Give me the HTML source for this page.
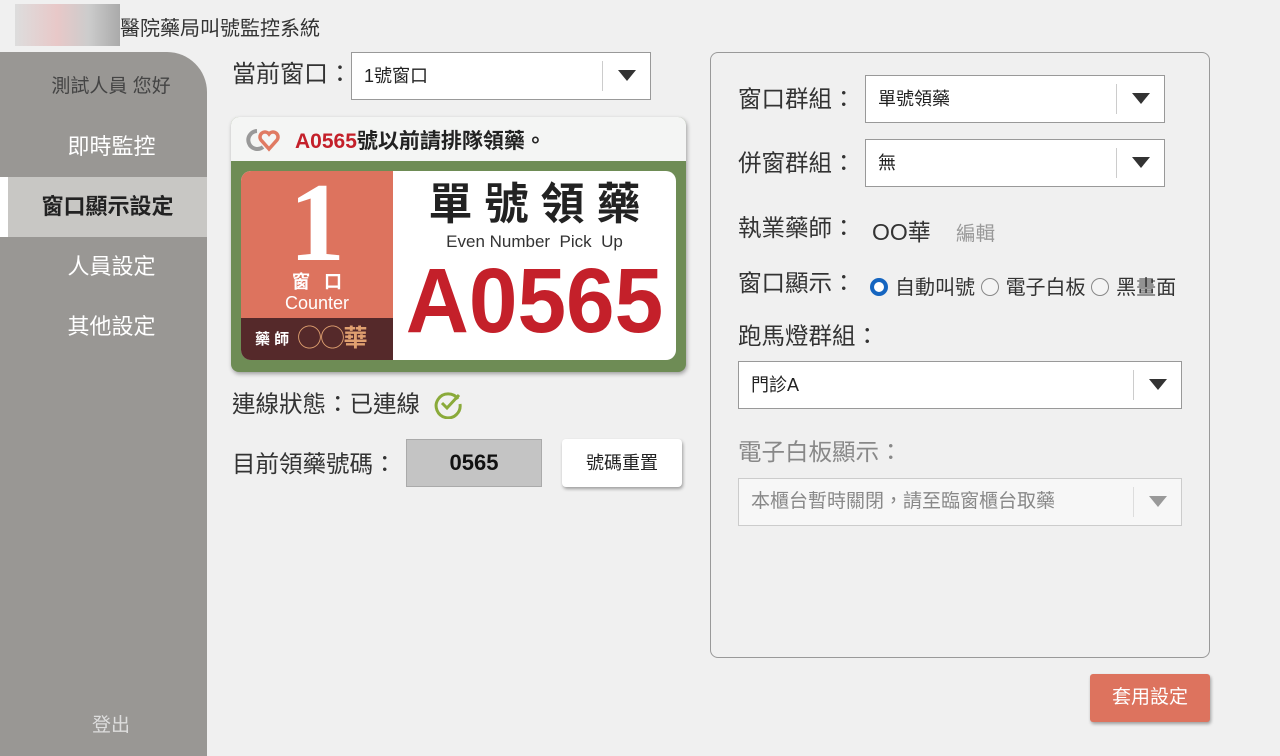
<!DOCTYPE html>
<html><head><meta charset="utf-8"><style>
*{margin:0;padding:0;box-sizing:border-box}
body{width:1280px;height:756px;background:#f0f0f0;font-family:"Liberation Sans","Noto Sans CJK TC",sans-serif;color:#333;position:relative;overflow:hidden}
.abs{position:absolute}
.side{left:0;top:52px;width:207px;height:704px;background:#999794;border-top-right-radius:40px}
.nav{position:absolute;left:0;width:207px;height:60px;line-height:60px;text-align:center;color:#fff;font-size:22px}
.sel{position:absolute;background:#fff;border:1px solid #999;height:48px;font-size:18px;padding-left:12px;line-height:46px;color:#222}
.sel .ar{position:absolute;right:0;top:8px;width:48px;height:30px;border-left:1px solid #ccc}
.sel .ar:after{content:"";position:absolute;left:15px;top:9px;border-left:9px solid transparent;border-right:9px solid transparent;border-top:11px solid #333}
.lbl{font-size:23.5px;color:#333;line-height:30px}
.radio{display:inline-block;width:18px;height:18px;border-radius:50%;border:1px solid #888;background:#f4f4f4;vertical-align:-2px;margin-right:7px}
</style></head><body>
<div class="abs" style="left:15px;top:4px;width:105px;height:42px;background:linear-gradient(90deg,#ddd,#e8c8c8 40%,#ccc 70%,#aaa)"></div>
<div class="abs" style="left:120px;top:12px;font-size:20px;color:#333">醫院藥局叫號監控系統</div>
<div class="abs side"></div>
<div class="abs" style="left:0;top:71px;width:222px;text-align:center;font-size:19px;color:#444">測試人員 您好</div>
<div class="nav" style="top:117px;left:8px">即時監控</div>
<div class="nav" style="top:177px;left:8px;width:199px;background:#c8c7c4;color:#222;font-weight:bold">窗口顯示設定</div>
<div class="abs" style="left:0;top:177px;width:8px;height:60px;background:#fff"></div>
<div class="nav" style="top:237px;left:8px">人員設定</div>
<div class="nav" style="top:297px;left:8px">其他設定</div>
<div class="abs" style="left:0;top:710px;width:222px;text-align:center;font-size:19px;color:#ddd">登出</div>

<div class="abs lbl" style="left:232px;top:60px;font-size:24px">當前窗口：</div>
<div class="sel" style="left:351px;top:52px;width:300px">1號窗口<div class="ar"></div></div>

<div class="abs" style="left:231px;top:117px;width:455px;height:255px;border-radius:8px;background:#6e8c55;box-shadow:1px 2px 4px rgba(0,0,0,.35);overflow:hidden">
 <div style="height:44px;background:#f4f5f4;position:relative">
  <svg class="abs" style="left:12px;top:10px" width="46" height="26" viewBox="0 0 46 26"><path d="M14 4a9 9 0 1 0 6 16" fill="none" stroke="#999" stroke-width="4"/><path d="M26 22l-8-9a5 5 0 0 1 8-6a5 5 0 0 1 8 6z" fill="none" stroke="#e07a62" stroke-width="3.5"/></svg>
  <div class="abs" style="left:64px;top:8px;font-size:21px;font-weight:bold;color:#222;white-space:nowrap"><span style="color:#c4202a">A0565</span>號以前請排隊領藥。</div>
 </div>
 <div class="abs" style="left:10px;top:54px;width:435px;height:189px;border-radius:10px;overflow:hidden;background:#fff">
  <div class="abs" style="left:0;top:0;width:152px;height:147px;background:#dd735e;color:#fff;text-align:center">
   <div style="font-family:'Liberation Serif',serif;font-weight:bold;font-size:112px;line-height:96px;margin-top:4px">1</div>
   <div style="font-size:18px;font-weight:bold;letter-spacing:14px;line-height:22px;padding-left:14px">窗口</div>
   <div style="font-size:18px;line-height:20px">Counter</div>
  </div>
  <div class="abs" style="left:0;top:147px;width:152px;height:42px;background:#55292a;color:#fff;font-size:15px;font-weight:bold;line-height:42px;padding-left:14px;white-space:nowrap">藥 師 &nbsp;<span style="color:#e0a070;font-size:24px;letter-spacing:-1px;vertical-align:-2px">◯◯華</span></div>
  <div class="abs" style="left:152px;top:0;width:283px;text-align:center">
   <div style="font-size:44px;font-weight:bold;color:#222;letter-spacing:12px;line-height:60px;margin-top:4px;padding-left:12px;white-space:nowrap">單號領藥</div>
   <div style="font-size:17px;color:#333;line-height:14px">Even Number&nbsp; Pick&nbsp; Up</div>
   <div style="font-size:92px;font-weight:bold;color:#c4202a;line-height:104px;transform:scaleX(.95)">A0565</div>
  </div>
 </div>
</div>

<div class="abs lbl" style="left:232px;top:389px">連線狀態：已連線</div>
<svg class="abs" style="left:433px;top:389px" width="30" height="30" viewBox="0 0 30 30"><path d="M25 10A12 12 0 1 0 27 15" fill="none" stroke="#8aaa3a" stroke-width="3"/><path d="M9 14l5 5L26 6" fill="none" stroke="#8aaa3a" stroke-width="3"/></svg>
<div class="abs lbl" style="left:232px;top:449px">目前領藥號碼：</div>
<div class="abs" style="left:406px;top:439px;width:136px;height:48px;background:#c4c4c4;border:1px solid #aaa;text-align:center;line-height:46px;font-size:22px;font-weight:bold;color:#111">0565</div>
<div class="abs" style="left:562px;top:439px;width:120px;height:48px;background:#fff;border-radius:4px;box-shadow:1px 2px 3px rgba(0,0,0,.35);text-align:center;line-height:48px;font-size:18px;color:#222">號碼重置</div>

<div class="abs" style="left:710px;top:52px;width:500px;height:606px;border:1px solid #999;border-radius:8px"></div>
<div class="abs lbl" style="left:738px;top:84px">窗口群組：</div>
<div class="sel" style="left:865px;top:75px;width:300px">單號領藥<div class="ar"></div></div>
<div class="abs lbl" style="left:738px;top:148px">併窗群組：</div>
<div class="sel" style="left:865px;top:139px;width:300px">無<div class="ar"></div></div>
<div class="abs lbl" style="left:738px;top:213px">執業藥師：</div>
<div class="abs" style="left:872px;top:213px;font-size:23px;color:#333">OO華</div>
<div class="abs" style="left:956px;top:217px;font-size:19.5px;color:#999">編輯</div>
<div class="abs lbl" style="left:738px;top:268px">窗口顯示：</div>
<div class="abs" style="left:870px;top:271px;font-size:20px;color:#333;white-space:nowrap"><span class="radio" style="border:4px solid #1565c0;background:#fff"></span>自動叫號 <span class="radio"></span>電子白板 <span class="radio"></span>黑畫面</div>
<div class="abs lbl" style="left:738px;top:321px">跑馬燈群組：</div>
<div class="sel" style="left:738px;top:361px;width:444px">門診A<div class="ar"></div></div>
<div class="abs lbl" style="left:738px;top:437px;color:#888">電子白板顯示：</div>
<div class="sel" style="left:738px;top:478px;width:444px;background:#f7f7f7;border-color:#ccc;color:#888;font-size:19px">本櫃台暫時關閉，請至臨窗櫃台取藥<div class="ar" style="border-color:#ddd"></div></div>
<style>.sel[style*="f7f7f7"] .ar:after{border-top-color:#999}</style>
<div class="abs" style="left:1090px;top:674px;width:120px;height:48px;background:#dd735e;border-radius:3px;box-shadow:1px 2px 3px rgba(0,0,0,.35);color:#fff;font-size:19px;text-align:center;line-height:48px">套用設定</div>
</body></html>
